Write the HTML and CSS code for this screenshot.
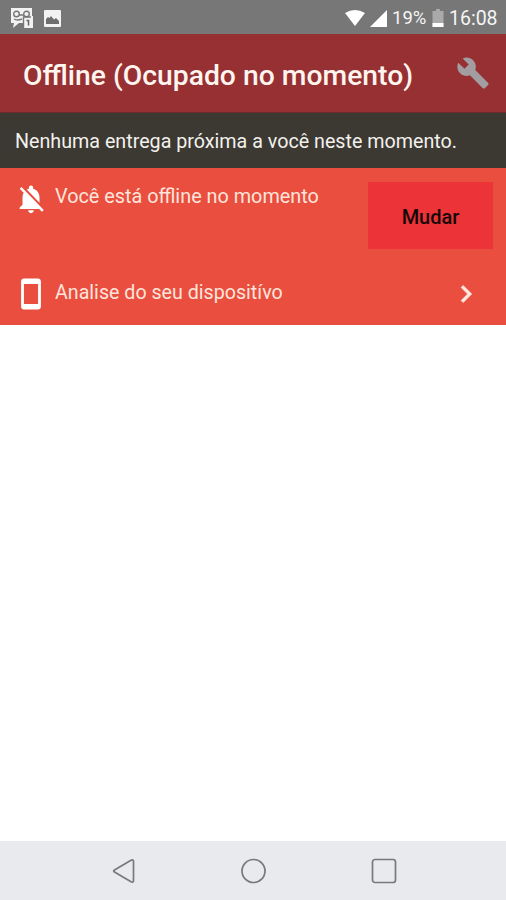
FILE: index.html
```html
<!DOCTYPE html>
<html lang="pt-BR">
<head>
<meta charset="utf-8">
<title>Offline</title>
<link rel="stylesheet" href="styles.css">
</head>
<body>
<div class="status">
  <svg class="chat" width="22" height="21" viewBox="0 0 22 21"><path fill="#f2f2f2" d="M0 0h21v8h1v12h-9v-5H8l-6 5 1-5H0z"/><g fill="none" stroke="#777" stroke-width="1.4"><circle cx="5.5" cy="6" r="2.8"/><circle cx="15.5" cy="6" r="2.8"/><path d="M8 7h5M3 11q3 2 8 0M12.5 20V9H20"/></g><path fill="none" stroke="#666" stroke-width="1.5" d="M15.5 12.5h2v5"/></svg>
  <svg width="17" height="17" viewBox="0 0 17 17"><rect width="17" height="17" rx="1" fill="#f2f2f2"/><path fill="#6e6e6e" d="M2 14V9l2-2 1.500 1L7 6l3 3.500L12 8l3 3v3z"/></svg>
  <span class="gap"></span>
  <svg class="wifi" width="20" height="16" viewBox="0 0 20 16"><path fill="#fff" d="M0 3Q10-3 20 3L10 16z"/></svg>
  <svg class="signal" width="17" height="17" viewBox="0 0 17 17"><path fill="#fff" d="M17 0v17H0z"/></svg>
  <span class="percent">19%</span>
  <svg class="battery" width="12" height="18" viewBox="0 0 12 18"><path fill="#aaa" d="M4 0h4v2h3.500v16H.5V2H4z"/><path fill="#fff" d="M.5 14h11v4H.5z"/></svg>
  <span class="clock">16:08</span>
</div>
<header class="bar">
  <h1>Offline (Ocupado no momento)</h1>
  <svg width="34" height="34" viewBox="0 0 24 24"><path fill="#a19da0" d="M22.7 19l-9.100-9.100c.9-2.300.4-5-1.500-6.900-2-2-5-2.400-7.400-1.300L9 6 6 9 1.600 4.700C.4 7.100.9 10.100 2.900 12.100c1.900 1.900 4.600 2.400 6.900 1.500l9.100 9.100c.4.4 1 .4 1.400 0l2.300-2.300c.5-.4.5-1.100.1-1.400z"/></svg>
</header>
<p class="notice">Nenhuma entrega próxima a você neste momento.</p>
<main class="panel">
  <div class="row first">
    <svg width="34" height="34" viewBox="0 0 24 24"><path fill="#fff" d="M20 18.690L7.840 6.140 5.270 3.490 4 4.760l2.800 2.800v.01c-.52.99-.8 2.160-.8 3.420v5l-2 2v1h13.730l2 2L21 19.720l-1-1.030zM12 22c1.110 0 2-.89 2-2h-4c0 1.110.89 2 2 2zm6-7.320V11c0-3.080-1.640-5.640-4.500-6.320V4c0-.83-.67-1.500-1.500-1.500s-1.500.67-1.500 1.500v.68c-.5.100-1 .3-1.440.55L18 14.680z"/></svg>
    <span class="label offline">Você está offline no momento</span>
    <button>Mudar</button>
  </div>
  <div class="row second">
    <svg width="34" height="34" viewBox="0 0 24 24"><path fill="#fff" d="M17 1.010L7 1c-1.100 0-1.990.9-1.990 2v18c0 1.100.89 2 1.990 2h10c1.100 0 2-.9 2-2V3c0-1.100-.9-1.990-2-1.990zM17 19H7V5h10v14z"/></svg>
    <span class="label device">Analise do seu dispositívo</span>
    <svg class="next" width="34" height="34" viewBox="0 0 24 24"><path fill="#ffe9e2" stroke="#ffe9e2" stroke-width=".5" d="M10 6L8.590 7.410 13.170 12l-4.580 4.590L10 18l6-6z"/></svg>
  </div>
</main>
<div class="blank"></div>
<nav class="nav">
  <svg width="26" height="26" viewBox="0 0 26 26"><path d="M3.500 12Q1.800 13 3.500 14L20 23.800Q22.500 25 22.500 22.500V3.500Q22.500 1 20 2.200z"/></svg>
  <svg width="26" height="26" viewBox="0 0 26 26"><circle cx="12.500" cy="13" r="11.500"/></svg>
  <svg width="26" height="26" viewBox="0 0 26 26"><rect x="1.500" y="1.500" width="23" height="23" rx="2.500"/></svg>
</nav>
</body>
</html>
```
FILE: styles.css
```css
* { box-sizing: border-box; }
body { margin: 0; width: 506px; height: 900px; display: flex; flex-direction: column; background: #fff; font-family: Roboto, sans-serif; overflow: hidden; }
svg { display: block; flex: none; }
.status { height: 34px; flex: none; background: #777; color: #f5f5f5; display: flex; align-items: center; padding: 2px 8px 0 11px; font-size: 19.500px; white-space: nowrap; }
.chat { margin-right: 11px; }
.gap { flex: 1; }
.signal { margin: 0 5px 0 5px; }
.percent { width: 35px; font-size: 18.500px; }
.battery { margin: 0 5px 0 5px; }
.clock { width: 49px; }
.bar { height: 79px; flex: none; background: #963033; border-bottom: 1px solid #6d2b2b; display: flex; align-items: center; justify-content: space-between; padding: 1px 16px 0 23px; }
h1 { margin: 3px 0 0; font-size: 28.300px; font-weight: 500; color: #fff4ee; white-space: nowrap; }
.bar svg { margin-bottom: 2px; }
.notice { margin: 0; height: 55px; flex: none; background: #3c3832; color: #f3f1ed; font-size: 19.700px; line-height: 58px; padding-left: 15px; white-space: nowrap; }
.panel { height: 157px; flex: none; background: #e94e3e; padding: 14px 13px 0 14px; }
.row { display: flex; align-items: flex-start; }
.first { height: 95px; }
.label { color: #ffe5dc; font-size: 19.820px; line-height: 30px; margin-left: 7px; white-space: nowrap; }
.device { font-size: 19.650px; line-height: 32px; }
button { margin: 0 0 0 auto; width: 125px; height: 67px; border: 0; background: #eb3338; color: #160808; font: 500 20px Roboto, sans-serif; padding: 2px 0 0; }
.next { margin-left: auto; margin-right: 10px; }
.blank { flex: 1; }
.nav { height: 59px; flex: none; background: #e8eaed; display: flex; justify-content: center; gap: 104px; align-items: center; padding: 1px 0 0 2px; }
.nav svg { fill: none; stroke: #77797b; stroke-width: 1.700; }
```
